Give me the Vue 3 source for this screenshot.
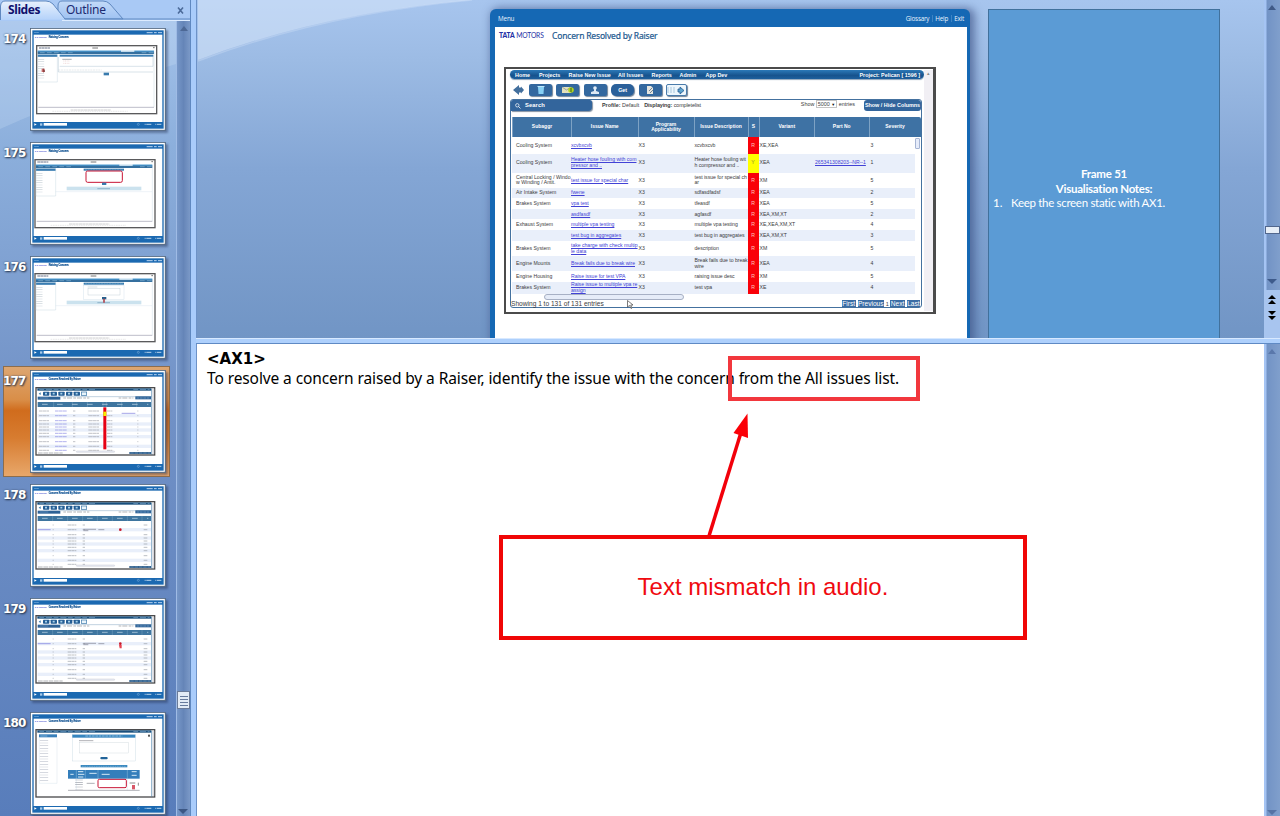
<script setup>
const thumbs = [
  { n: 174, kind: 'form', title: 'Raising Concern' },
  { n: 175, kind: 'note', title: 'Raising Concern' },
  { n: 176, kind: 'panel', title: 'Raising Concern' },
  { n: 177, kind: 'issues', title: 'Concern Resolved By Raiser', on: true },
  { n: 178, kind: 'list', title: 'Concern Resolved By Raiser' },
  { n: 179, kind: 'listClick', title: 'Concern Resolved By Raiser' },
  { n: 180, kind: 'detail', title: 'Concern Resolved By Raiser' },
]
const isForm = k => ['form', 'note', 'panel'].includes(k)
const isList = k => ['list', 'listClick', 'issues'].includes(k)
const listRows = [123, 137, 152, 162, 171, 180, 190, 200, 215, 229, 241]
const issueCols = [[20, 30], [68, 36], [122, 7], [168, 32], [224, 16], [315, 3]]

const nav = ['Home', 'Projects', 'Raise New Issue', 'All Issues', 'Reports', 'Admin', 'App Dev']
const heads = ['Subaggr', 'Issue Name', 'Program\nApplicability', 'Issue Description', 'S', 'Variant', 'Part No', 'Severity']
const rows = [
  ['Cooling System', 'xcvbxcvb', 'xcvbxcvb', 'XE,XEA', '', '3', 16.3],
  ['Cooling System', 'Heater hose fouling with com\npressor and ..', 'Heater hose fouling wit\nh compressor and ..', 'XEA', '265341308203--NR--1', '1', 19],
  ['Central Locking / Windo\nw Winding / Antit.', 'test issue for special char', 'test issue for special ch\nar', 'XM', '', '5', 15.7],
  ['Air Intake System', 'fwene', 'sdfasdfadsf', 'XEA', '', '2', 10.2],
  ['Brakes System', 'vpa test', 'tfeasdf', 'XEA', '', '5', 11],
  ['', 'asdfasdf', 'agfasdf', 'XEA,XM,XT', '', '2', 10],
  ['Exhaust System', 'multiple vpa testing', 'multiple vpa testing', 'XE,XEA,XM,XT', '', '4', 11],
  ['', 'test bug in aggregates', 'test bug in aggregates', 'XEA,XM,XT', '', '3', 10.2],
  ['Brakes System', 'take charge with check multip\nle data', 'description', 'XM', '', '5', 15.7],
  ['Engine Mounts', 'Break fails due to break wire', 'Break fails due to break\nwire', 'XEA', '', '4', 15],
  ['Engine Housing', 'Raise issue for test VPA', 'raising issue desc', 'XM', '', '5', 10.7],
  ['Brakes System', 'Raise issue to multiple vpa re\nassign', 'test vpa', 'XE', '', '4', 11.5],
]
</script>

<template>
  <div class="app">
    <aside class="side">
      <div class="tabs">
        <svg class="tabshape" width="196" height="22" viewBox="0 0 196 22">
          <defs>
            <linearGradient id="t1" x1="0" y1="0" x2="0" y2="1"><stop offset="0" stop-color="#e8f1fd" /><stop offset="1" stop-color="#b4d2fa" /></linearGradient>
            <linearGradient id="t2" x1="0" y1="0" x2="0" y2="1"><stop offset="0" stop-color="#c3daf8" /><stop offset="1" stop-color="#9fc2f2" /></linearGradient>
          </defs>
          <path d="M58 12V6Q58 1 62 1H103Q107 1 110 4L123 19H64Z" fill="url(#t2)" stroke="#5f88c0" />
          <path d="M0.5 20V6Q1 1 5 1H46Q50 1 53 4L65 19H190" fill="url(#t1)" stroke="none" />
          <path d="M0.5 20V6Q1 1 5 1H46Q50 1 53 4L65 19H190" fill="none" stroke="#5f88c0" />
          <path d="M62 20.5H190" stroke="#dcebff" />
        </svg>
        <b class="tab">Slides</b><span class="tab out">Outline</span>
        <svg class="close" width="7" height="7" viewBox="0 0 7 7"><path d="M1 .5L6 6.500M6 .5L1 6.500" stroke="#4d6c9b" stroke-width="1.600" /></svg>
      </div>
      <div class="sidebody">
        <svg class="swoosh" width="176" height="796" viewBox="0 0 176 796">
          <path d="M0 0H176V43Q80 72 0 108Z" fill="#d8e8fa" opacity=".22" />
        </svg>
        <div class="thumbs">
          <div v-for="t in thumbs" :key="t.n" class="thumb" :class="{ on: t.on }">
            <b class="num">{{ t.n }}</b>
            <svg class="mini" width="136" height="103" viewBox="0 0 408 309">
              <rect x="1" y="1" width="405" height="306" fill="#fff" stroke="#51667f" stroke-width="3" />
              <rect x="7" y="7" width="394" height="295" fill="#1b69b1" />
              <rect x="11" y="20" width="386" height="262" fill="#fff" />
              <text x="13" y="16" class="mt w">Menu</text>
              <path d="M350 14H396" stroke="#b8d4ef" stroke-width="3" stroke-dasharray="18 4 8 4" />
              <text x="14" y="31" class="mt logo" textLength="36" lengthAdjust="spacingAndGlyphs">TATA MOTORS</text>
              <text x="56" y="31" class="mt ttl" :textLength="isForm(t.kind) ? 60 : 96" lengthAdjust="spacingAndGlyphs">{{ t.title }}</text>
              <path d="M13 286L20 289.500L13 293Z" fill="#fff" />
              <rect x="30" y="286" width="7" height="7" fill="#a8c9e8" />
              <rect x="41" y="285" width="70" height="8" fill="#fff" />
              <circle cx="325" cy="289" r="3" fill="none" stroke="#b8d4ef" />
              <path d="M344 289H364M376 289H394" stroke="#b5d0ea" stroke-width="3" stroke-dasharray="3 2 20 2" />

              <g v-if="isForm(t.kind)" :transform="t.kind === 'form' ? 'translate(5 0)' : 'translate(0 0)'">
                <rect x="15" y="53" width="360" height="204" fill="#fff" stroke="#5a5a5c" stroke-width="4" />
                <path d="M22 60H55" stroke="#6a748a" stroke-width="3" stroke-dasharray="8 1" />
                <path d="M182 60H199M364 59H369" stroke="#777" stroke-width="3" />
                <path d="M18 70H367" stroke="#4c9bd2" stroke-width="5" />
                <rect x="18" y="71" width="349" height="7" fill="#356f9e" />
                <path d="M25 74H130M330 74H365" stroke="#7fb0d2" stroke-width="2" stroke-dasharray="14 7" />
                <path d="M268 69H308" stroke="#fff" stroke-width="4" />
                <path d="M18 83H77" stroke="#397cb1" stroke-width="7" />
                <path d="M77 80V162M367 70V237M18 80V162H77" stroke="#b4cad9" fill="none" />
                <path d="M28 93V155" stroke="#cfd7dd" stroke-width="19" stroke-dasharray="2 5" />
                <path d="M20 238H367" stroke="#9d9daf" stroke-width="2" />
                <path d="M117 246H238" stroke="#b8b8bb" stroke-width="2" stroke-dasharray="9 1" />
                <path d="M62 250H288" stroke="#dedee0" stroke-width="2" stroke-dasharray="5 2" />
                <g v-if="t.kind === 'form'">
                  <rect x="84" y="80" width="281" height="6" fill="#3b7eb3" />
                  <path d="M80 87V132H364M84 115H364V85" fill="none" stroke="#8baac0" />
                  <path d="M92 94H120" stroke="#7f8a92" stroke-width="2" /><path d="M95 99H115M95 106H115" stroke="#cf8e8e" stroke-dasharray="3 2" />
                  <path d="M80 126H210" stroke="#b8c3ca" stroke-dasharray="6 2" />
                  <rect x="216" y="134" width="16" height="8" fill="#397bad" />
                  <rect x="30" y="122" width="9" height="10" fill="#c66b6b" /><path d="M35 121L40 130L35 134Z" fill="#7b3434" />
                </g>
                <g v-else>
                  <rect x="161" y="80" width="121" height="6" fill="#347aaf" />
                  <path d="M165 83H279" stroke="#9fc6e1" stroke-dasharray="6 2" />
                  <path d="M77 149H366" stroke="#ccdce8" />
                  <rect x="110" y="134" width="224" height="11" fill="#cbe2ee" />
                  <path d="M202 140H240" stroke="#719db9" stroke-width="2" />
                  <template v-if="t.kind === 'note'">
                    <rect x="168" y="87" width="109" height="34" rx="5" fill="#fff" stroke="#c81434" stroke-width="3" />
                    <rect x="216" y="122" width="13" height="7" fill="#397bad" />
                  </template>
                  <template v-else>
                    <rect x="160" y="88" width="122" height="42" fill="#fff" stroke="#c0d5e3" />
                    <path d="M173 93H202" stroke="#889daa" /><rect x="174" y="97" width="96" height="20" fill="none" stroke="#a9bdca" />
                    <rect x="216" y="123" width="13" height="7" fill="#275f8d" /><path d="M222 128V140" stroke="#b24650" stroke-width="5" />
                  </template>
                </g>
              </g>

              <g v-else>
                <rect x="18" y="53" width="356" height="202" fill="#fff" stroke="#4b4b4d" stroke-width="4" />
                <rect x="22" y="55" width="342" height="7" fill="#194f7d" />
                <path d="M28 58.500H200M310 58.500H359" stroke="#6f9dc2" stroke-width="2" stroke-dasharray="14 6 18 5" />
                <path d="M365 57V254" stroke="#477eaa" stroke-width="2" /><path d="M370 57V252" stroke="#d8d8dd" stroke-width="5" />
                <g v-if="isList(t.kind)">
                  <path d="M26 71L32 67V75Z" fill="#377baf" />
                  <rect v-for="i in 5" :key="i" :x="16 + i * 23" y="65" width="19" height="12" rx="2" fill="#245d94" />
                  <path d="M45 71H150" stroke="#a8d2eb" stroke-width="5" stroke-dasharray="6 17" />
                  <rect x="154" y="66" width="16" height="10" fill="#e8f4fb" stroke="#3473a5" stroke-width="2" />
                  <rect x="23" y="80" width="68" height="9" fill="#2e6296" /><path d="M29 84H55" stroke="#6c9cc6" stroke-width="2" />
                  <path d="M91 80H365" stroke="#4375a1" />
                  <path d="M100 84H178M266 84H310" stroke="#8e9397" stroke-width="2" stroke-dasharray="8 3 15 4" />
                  <rect x="316" y="79" width="47" height="9" fill="#2e6296" /><path d="M320 84H358" stroke="#7fa8cb" stroke-width="2" stroke-dasharray="8 2" />
                  <rect x="23" y="96" width="340" height="15" fill="#3e759f" />
                  <path v-if="t.kind === 'issues'" d="M71 96V111M127 96V111M172 96V111M219 96V111M229 96V111M275 96V111M320 96V111" stroke="#91b7ce" />
                  <path v-else d="M68 96V111M113 96V111M158 96V111M202 96V111M247 96V111M292 96V111M336 96V111" stroke="#91b7ce" />
                  <path d="M36 103H355" stroke="#c4dbe8" stroke-width="2" stroke-dasharray="17 28" />
                  <g v-for="(y, i) in listRows" :key="y">
                    <rect v-if="i % 2" x="23" :y="y - 5" width="340" height="10" fill="#e9effa" />
                    <template v-if="t.kind === 'issues'">
                      <path v-for="c in issueCols" :key="c[0]" :d="`M${c[0] + 7} ${y}h${c[1]}`" :stroke="c[0] === 68 ? '#8c8ce4' : '#a2a4ac'" stroke-width="2" stroke-dasharray="11 1" />
                    </template>
                    <path v-else :d="`M68 ${y}h3M113 ${y}h26M158 ${y}h7M341 ${y}h12`" stroke="#9ca0a8" stroke-width="2" stroke-dasharray="10 1" />
                  </g>
                  <template v-if="t.kind === 'issues'">
                    <rect x="220" y="112" width="9" height="126" fill="#e60012" /><rect x="220" y="125" width="9" height="13" fill="#f6eb00" />
                    <path d="M275 130H316" stroke="#7878dc" stroke-width="2" />
                  </template>
                  <template v-else>
                    <path d="M23 137H62" stroke="#7777dc" stroke-width="2" /><path d="M160 136H198M160 140H175M205 137H223" stroke="#7b7f8e" stroke-width="2" />
                    <circle cx="271" cy="137" r="4" fill="#cb1626" />
                    <path v-if="t.kind === 'listClick'" d="M267 141h8v10h-6z" fill="#e64552" />
                  </template>
                  <rect x="139" y="243" width="115" height="4" rx="2" fill="#edf0fa" stroke="#b0b2bc" />
                  <path d="M24 249H98" stroke="#8b8f94" stroke-width="2" stroke-dasharray="14 2" />
                  <rect x="298" y="246" width="65" height="6" fill="#33628f" />
                  <path d="M301 249H360" stroke="#c6dcea" stroke-dasharray="10 3" />
                </g>
                <g v-else>
                  <rect x="27" y="67" width="54" height="9" fill="#397fba" /><path d="M31 72H52" stroke="#9bc8e8" stroke-width="2" />
                  <path d="M28 77V214H81V77" fill="none" stroke="#c9d9e4" /><path d="M42 84V209" stroke="#c9cdd6" stroke-width="25" stroke-dasharray="2 6" />
                  <rect x="127" y="68" width="189" height="79" fill="#fff" stroke="#b9cedb" /><rect x="127" y="68" width="189" height="9" fill="#3685bf" />
                  <path d="M166 72H277" stroke="#b8d8ec" stroke-width="2" stroke-dasharray="8 2" />
                  <path d="M147 86H190" stroke="#898a90" stroke-width="2" /><rect x="149" y="92" width="147" height="31" fill="none" stroke="#c1cbd3" />
                  <rect x="211" y="135" width="22" height="7" rx="3" fill="#226499" />
                  <rect x="152" y="159" width="140" height="7" fill="#3988bf" /><path d="M156 163H287" stroke="#bcdcec" stroke-dasharray="5 2" />
                  <rect x="114" y="174" width="215" height="26" fill="#347ebb" />
                  <path d="M139 174V235M166 174V200M204 174V200M292 174V235" stroke="#bed9eb" />
                  <path d="M121 187H131M144 179H160M144 187H163M144 195H160M178 184H200M215 187H239M305 179H320M305 190H320" stroke="#d5e9f5" stroke-width="3" />
                  <path d="M147 203V232" stroke="#a7aab3" stroke-width="23" stroke-dasharray="2 5" /><path d="M170 214H194" stroke="#858991" stroke-width="2" />
                  <rect x="204" y="202" width="85" height="25" rx="4" fill="#fff" stroke="#c81434" stroke-width="3" />
                  <path d="M114 235H329" stroke="#8a8b94" stroke-width="2" /><rect x="306" y="219" width="9" height="13" fill="#d85767" /><path d="M299 213H316M325 212V221" stroke="#555" stroke-width="2" />
                  <rect x="354" y="68" width="6" height="6" fill="#555" />
                </g>
              </g>
            </svg>
          </div>
        </div>
        <div class="sscroll">
          <svg width="14" height="796"><path d="M3 10L7 5L11 10Z" fill="#4d6895" /><path d="M1 788H11L6 793Z" fill="#3c5784" />
            <rect x=".5" y="670.500" width="12" height="17" fill="#e3ebf5" stroke="#6b7b98" /><path d="M3 675.500H11M3 678.500H11M3 681.500H11M3 684.500H11" stroke="#687b9c" /></svg>
        </div>
      </div>
    </aside>

    <main class="main">
      <section class="stage">
        <svg class="swoosh" width="300" height="70" viewBox="0 0 300 70"><path d="M1 0H275Q125 13 1 60Z" fill="#dceafb" opacity=".5" /><path d="M1 61Q125 14 275 0" fill="none" stroke="#d9e9fb" stroke-width="1.500" opacity=".3" /></svg>
        <div class="slide">
          <header class="top"><span>Menu</span><nav><span>Glossary</span><i></i><span>Help</span><i></i><span>Exit</span></nav></header>
          <div class="paper">
            <div class="title"><span class="brand"><b>TATA</b> MOTORS</span><span class="heading">Concern Resolved by Raiser</span></div>
            <div class="shot">
              <div class="content">
                <div class="navbar"><b v-for="(n, i) in nav" :key="n" :class="'n' + i">{{ n }}</b><b class="proj">Project: Pelican [ 1596 ]</b></div>
                <div class="tools">
                  <svg class="back" width="11" height="10" viewBox="0 0 11 10"><path d="M0 5L6 0V2.500H8V1.500L11 5L8 8.500V7.500H6V10Z" fill="#426f9d" /></svg>
                  <span class="tool"><svg width="10" height="10"><path d="M2 2H8L7.500 9H2.500Z" fill="#87d0f4" /><path d="M1.500 1.500H8.500" stroke="#bce8fc" /></svg></span>
                  <span class="tool"><svg width="14" height="10"><rect x="1" y="2" width="9" height="6" fill="#e3e1bc" /><path d="M1 2L5.500 5L10 2" fill="none" stroke="#657c94" stroke-width=".6" /><circle cx="10" cy="5" r="2.800" fill="#b2d51e" /><path d="M10 3V7" stroke="#365d25" /></svg></span>
                  <span class="tool"><svg width="10" height="10"><circle cx="5" cy="3" r="1.800" fill="#e3edf6" /><path d="M4 4H6V6L9 7V9H1V7L4 6Z" fill="#dce8f3" /></svg></span>
                  <span class="tool get">Get</span>
                  <span class="tool"><svg width="10" height="10"><path d="M2 1H6L8 3V9H2Z" fill="#e5e5df" /><path d="M4 6L7 3M5 8L8 5" stroke="#718393" /></svg></span>
                  <span class="tool pale"><svg width="20" height="9"><path d="M1 2H10M1 4H10M1 6H10" stroke="#a9c7dc" stroke-dasharray="2 1" /><path d="M12 3H14V1L18 4.500L14 8V6H12Z" fill="#5ea4cf" stroke="#235b90" stroke-width=".8" /></svg></span>
                </div>
                <div class="panel">
                  <div class="filter">
                    <b class="search"><svg width="6" height="6"><circle cx="2.300" cy="2.300" r="1.700" fill="none" stroke="#fff" stroke-width=".7" /><path d="M3.500 3.500L5.500 5.500" stroke="#fff" stroke-width=".8" /></svg>Search</b>
                    <span class="prof"><b>Profile:</b> Default</span><span class="disp"><b>Displaying:</b> completelist</span>
                    <span class="show">Show <em>5000 <small>▼</small></em> entries</span><b class="cols">Show / Hide Columns</b>
                  </div>
                  <div class="table">
                    <div class="row hd"><b v-for="h in heads" :key="h">{{ h }}</b></div>
                    <div v-for="(r, i) in rows" :key="i" class="row" :class="{ alt: i % 2 }" :style="{ height: r[6] + 'px' }">
                      <span>{{ r[0] }}</span><u>{{ r[1] }}</u><span class="x3">X3</span><span class="d">{{ r[2] }}</span>
                      <span class="s" :class="{ y: i === 1 }">{{ i === 1 ? 'Y' : 'R' }}</span><span class="v">{{ r[3] }}</span><u class="p">{{ r[4] }}</u><span class="sev">{{ r[5] }}</span>
                    </div>
                    <i class="vthumb"></i>
                  </div>
                  <div class="hbar"><i></i></div>
                  <div class="foot"><span>Showing 1 to 131 of 131 entries</span>
                    <svg class="cursor" width="7" height="9" viewBox="0 0 7 9"><path d="M.5.5V7L2.500 5.500L4 8.500L5 8L3.700 5H6Z" fill="#fff" stroke="#444" stroke-width=".7" /></svg>
                    <div class="pager"><em>First</em><em>Previous</em><span>1</span><em>Next</em><em>Last</em></div>
                  </div>
                </div>
              </div>
              <div class="gutter">▴</div>
            </div>
          </div>
        </div>
        <div class="frame">
          <b class="vn">Frame 51</b><b class="vn">Visualisation Notes:</b>
          <p><span>1.</span><span class="keep">Keep the screen static with AX1.</span></p>
        </div>
        <div class="rscroll">
          <svg width="16" height="338"><path d="M4 10L8 5L12 10Z" fill="#405a87" /><path d="M3 279H13L8 284Z" fill="#3e5b8b" />
            <rect x="1.500" y="226.500" width="14" height="7" fill="#e7eef7" stroke="#52678d" />
            <rect x="0" y="290" width="16" height="48" fill="#a8c5ef" />
            <path d="M4 299L8 295L12 299ZM4 304L8 300L12 304ZM4 311H12L8 315ZM4 316H12L8 320Z" fill="#000" /></svg>
        </div>
      </section>
      <div class="split"></div>
      <section class="notes">
        <div class="text"><b>&lt;AX1&gt;</b><p>To resolve a concern raised by a Raiser, identify the issue with the concern from the All issues list.</p></div>
        <div class="nscroll"><svg width="16" height="472"><path d="M4 10L8 5L12 10Z" fill="#5a78ab" /><path d="M3 466H13L8 471Z" fill="#5573a5" /></svg></div>
      </section>
    </main>

    <div class="mark"></div>
    <svg class="arrow" width="50" height="125" viewBox="0 0 50 125"><path d="M4 124L38 14" stroke="#f2000a" stroke-width="3.500" /><path d="M42.500 1.500L28.500 21L43 26Z" fill="#fb0007" /></svg>
    <div class="callout">Text mismatch in audio.</div>
  </div>
</template>

<style>
html, body { margin: 0; overflow: hidden; }
</style>
<style scoped>
* { box-sizing: border-box; }
svg { display: block; flex: none; }
i, em { font-style: normal; }
.app { position: relative; display: grid; grid-template-columns: 196px 1fr; width: 1280px; height: 816px; overflow: hidden; font-family: "Noto Sans", sans-serif; }
.side { position: relative; height: 816px; overflow: hidden; border-right: 5px solid #a9ccfb; background: linear-gradient(#a7c5ec, #8cafdc 18%, #7191c6 50%, #587dbb); display: flex; flex-direction: column; }
.side::after { content: ""; position: absolute; right: 0; top: 0; width: 1px; height: 816px; background: #5f88c0; }
.tabs { position: relative; height: 21px; flex: none; display: flex; align-items: center; background: #a9c9f5; color: #10106c; font-size: 12px; }
.tabshape { position: absolute; left: 0; top: 0; }
.tab { position: relative; width: 58px; padding-left: 8px; line-height: 18px; letter-spacing: -.4px; margin-top: -2px; }
.out { letter-spacing: -.25px; color: #1c2a70; }
.close { position: relative; margin-left: auto; margin-right: 7px; }
.sidebody { position: relative; flex: 1; display: flex; min-height: 0; }
.swoosh { position: absolute; left: 0; top: 0; }
.thumbs { position: relative; width: 176px; padding-top: 3px; }
.thumb { display: flex; width: 167px; height: 111px; margin: 0 0 3px 3px; padding: 3px 0 0; border: 1px solid transparent; }
.thumb.on { border-color: #8d6d4c; background: linear-gradient(#dda671, #d98e48 30%, #d06c1d 40%, #d77c30 65%, #e8a76a); }
.num { width: 27px; flex: none; color: #fff; font: bold 12px "DejaVu Sans", sans-serif; line-height: 22px; letter-spacing: -.9px; margin-left: -1px; text-shadow: 1px 1px 2px #26354d, 0 0 2px #4b5d7b; }
.mini { filter: drop-shadow(2px 2px 1px rgba(30, 45, 80, .45)); }
.mt { font: bold 7px "Liberation Sans", sans-serif; }
.mt.w { fill: #9ec6e8; font-size: 5px; }
.mt.logo { fill: #3a46c8; font-size: 7px; }
.mt.ttl { fill: #0d4f90; stroke: #0d4f90; stroke-width: .5px; font-size: 9px; }
.sscroll { width: 14px; background: linear-gradient(90deg, #7697c8, #6585b8 50%, #7b99c7); border-left: 1px solid #9fbbe5; }

.main { display: flex; flex-direction: column; height: 816px; }
.stage { position: relative; display: flex; height: 338px; overflow: hidden; background: linear-gradient(#a7c5ee, #9cbbe4 18%, #84a6d5 50%, #7195c5); border-left: 1px solid #6d92c7; }
.slide { position: relative; width: 480px; height: 380px; margin: 9px 0 0 293px; flex: none; background: #1568b4; border-radius: 6px 6px 0 0; padding: 0 3px 0 5px; box-shadow: 3px 1px 8px 2px rgba(60, 80, 130, .65); }
.top { height: 18px; display: flex; justify-content: space-between; align-items: center; padding: 1px 3px 0 3px; color: #e7f2fc; font: 6.300px "Open Sans", sans-serif; }
.top > span { letter-spacing: -.15px; }
.top nav { display: flex; gap: 2.500px; letter-spacing: -.2px; }
.top i { width: 1px; background: #3c84c4; margin: 1px 0; }
.paper { height: 362px; background: #fff; }
.title { display: flex; height: 40px; padding: 4px 0 0 4px; line-height: 10px; }
.brand { width: 53px; color: #2330a5; font: 6.700px/9px Lato, sans-serif; letter-spacing: -.12px; white-space: nowrap; }
.brand b { font-weight: 900; }
.heading { color: #22598f; font: 8.500px/10px "Noto Sans", sans-serif; letter-spacing: -.17px; white-space: nowrap; -webkit-text-stroke: .2px #22598f; }
.shot { display: flex; width: 432px; height: 247px; margin-left: 9px; border: 2px solid #4b4b4b; border-right-width: 3px; background: #fff; font-family: "Liberation Sans", sans-serif; color: #3c3c40; }
.content { width: 418px; padding: 1px 0 0 4px; display: flex; flex-direction: column; }
.gutter { width: 9px; background: #f1eff4; font-size: 5px; text-align: center; color: #888; margin: 1px 0; }
.navbar { display: flex; height: 9px; border-radius: 5px; background: linear-gradient(#2c79b8, #17538d 60%, #1d5f9d); color: #fff; font-size: 5.400px; line-height: 10px; padding-left: 5px; box-shadow: 0 1px 1px #8fa5bb; white-space: nowrap; }
.navbar b { flex: none; }
.n0 { width: 24px; } .n1 { width: 29.500px; } .n2 { width: 49.500px; } .n3 { width: 33.500px; } .n4 { width: 28px; } .n5 { width: 26px; }
.proj { margin-left: auto; padding-right: 4px; }
.tools { display: flex; height: 20px; padding: 5px 0 0 3px; }
.back { margin: 1px 5px 0 0; }
.tool { display: flex; justify-content: center; align-items: center; flex: none; width: 23px; height: 12px; margin-right: 4.400px; border-radius: 2px; background: #33689f; box-shadow: 1px 1px 1px #73859a; color: #fff; font-size: 5.400px; font-weight: 700; }
.get { border-radius: 5px; background: #2a609a; }
.pale { width: 21px; background: #edf6fc; border: 1px solid #4a7baa; }
.panel { flex: 1; border: 1.500px solid #44719f; border-left-width: 1px; border-radius: 3px; min-height: 0; display: flex; flex-direction: column; margin-bottom: 4px; width: 412px; }
.filter { display: flex; height: 17.300px; flex: none; font-size: 5.400px; line-height: 9px; white-space: nowrap; }
.search { width: 81px; height: 11px; background: #33659c; color: #fff; display: flex; align-items: center; gap: 4px; padding-left: 4px; border-radius: 2px 2px 4px 0; font-size: 5.800px; box-shadow: 1px 1px 1px #8492a2; letter-spacing: .1px; }
.prof { margin-left: 10px; line-height: 11px; } .disp { margin-left: 5px; line-height: 11px; letter-spacing: -.09px; }
.show { margin-left: auto; margin-right: 9px; line-height: 9px; }
.show em { border: 1px solid #c4c4c4; padding: 0 1px; } .show small { font-size: 4px; color: #111; }
.cols { width: 57px; height: 11px; color: #fff; background: #33659c; text-align: center; line-height: 11px; font-size: 5.400px; border-radius: 3px; }
.table { position: relative; height: 176.300px; margin-left: 1px; flex: none; font-size: 5.150px; line-height: 5.800px; }
.row { display: grid; grid-template-columns: 59px 66.500px 56px 54px 11px 55.500px 54.500px 46px; align-items: center; white-space: pre; width: 403px; overflow: hidden; }
.row > * { padding-left: 4px; }
.row u { padding-left: 0; color: #4242d6; letter-spacing: -.03px; text-underline-offset: .5px; text-decoration-thickness: .6px; }
.row .x3, .row .d { padding-left: 1px; } .row .v, .row .p { padding-left: 1px; } .row .sev { padding-left: 2px; }
.row .s { align-self: stretch; display: grid; place-items: center; padding: 0; background: #f90109; color: #ffc2bd; }
.row .s.y { background: #ffff00; color: #8a8a34; }
.alt { background: #e9effa; }
.hd { grid-template-columns: 59px 66.500px 56px 54px 11px 55.500px 54.500px 52px; height: 20px; width: 409px; background: #3e72a4; color: #fff; border-radius: 0 2px 0 0; font-size: 5px; }
.row.hd b { height: 20px; padding: 0; display: grid; place-items: center; text-align: center; border-left: 1px solid #7da2c4; }
.row .d { letter-spacing: -.04px; }
.vthumb { position: absolute; right: 1px; top: 21px; width: 5px; height: 11px; border: 1px solid #a6b5d4; background: #e6ecfa; border-radius: 1px; }
.hbar { height: 6px; flex: none; display: flex; align-items: center; padding-left: 33px; }
.hbar i { width: 140px; height: 6px; border: 1px solid #a7b0c4; border-radius: 3px; background: #e6ecf8; }
.foot { display: flex; height: 8px; flex: none; font-size: 6.600px; line-height: 8px; white-space: nowrap; }
.cursor { margin: 0 0 0 23px; }
.pager { margin-left: auto; display: flex; gap: 2px; padding-right: 1px; }
.pager span { font-size: 5.500px; margin: 0 -.3px; }
.pager em { color: #fff; background: #3b6da5; line-height: 7px; height: 7px; padding: 0 .4px; }
.frame { width: 232px; height: 360px; margin: 9px 0 0 18px; flex: none; border: 1px solid #41719c; background: #5b9bd5; color: #fff; font: 11.500px/15px Lato, "Open Sans", sans-serif; padding-top: 156px; display: flex; flex-direction: column; text-align: center; }
.vn { letter-spacing: -.25px; }
.keep { letter-spacing: -.3px; }
.frame p { margin: 0; display: flex; padding-left: 4px; line-height: 14px; }
.frame p span:first-child { width: 18px; text-align: left; }
.rscroll, .nscroll { width: 16px; margin-left: auto; flex: none; background: linear-gradient(90deg, #a5c4f3 0 2px, #7293c5 3px, #809fcc); }
.split { height: 6px; flex: none; background: #aed0fc; border-top: 1px solid #d8e9ff; border-bottom: 1px solid #5f8ac4; }
.notes { flex: 1; display: flex; background: #fff; border-left: 1px solid #6d92c7; }
.text { padding: 6px 0 0 10px; font-size: 15.500px; line-height: 19px; color: #000; white-space: nowrap; }
.text b { display: block; font: bold 15px/19px "DejaVu Sans", sans-serif; }
.text p { margin: 0; letter-spacing: -.1px; }
.mark { position: absolute; left: 728px; top: 356px; width: 192px; height: 45px; border: 4px solid #f2373d; }
.arrow { position: absolute; left: 705px; top: 412px; }
.callout { position: absolute; left: 499px; top: 535px; width: 528px; height: 105px; padding-bottom: 2px; border: 4px solid #f00606; background: #fff; color: #f00a10; display: grid; place-items: center; font: 24px "Liberation Sans", sans-serif; }
</style>
